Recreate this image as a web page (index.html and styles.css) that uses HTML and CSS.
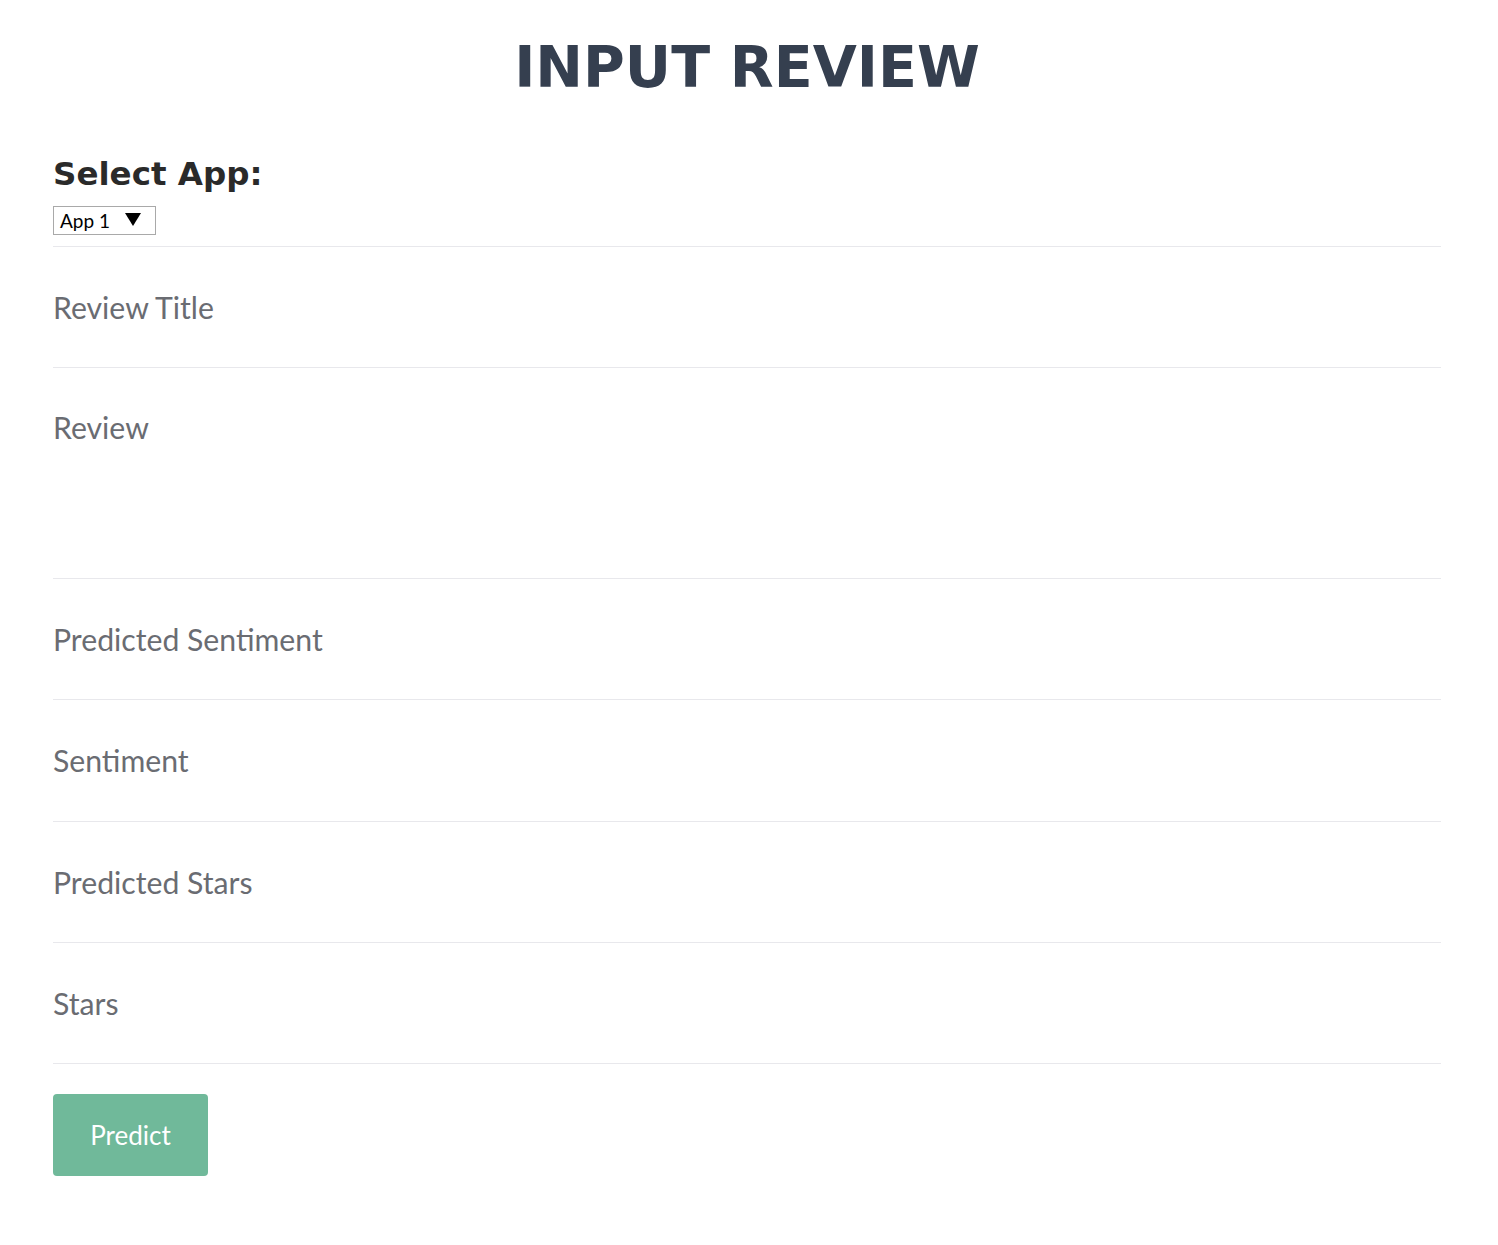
FILE: index.html
```html
<!DOCTYPE html>
<html>
<head>
<meta charset="utf-8">
<link rel="stylesheet" href="styles.css">
</head>
<body>
<div class="page">
  <h1 class="title">INPUT REVIEW</h1>
  <div class="select-group">
    <h2 class="select-label">Select App:</h2>
    <div class="select-box"><span>App 1</span><span class="arrow"></span></div>
  </div>
  <div class="field"><input class="input" placeholder="Review Title"></div>
  <div class="field field-tall"><textarea class="textarea" placeholder="Review"></textarea></div>
  <div class="field"><input class="input" placeholder="Predicted Sentiment"></div>
  <div class="field"><input class="input" placeholder="Sentiment"></div>
  <div class="field"><input class="input" placeholder="Predicted Stars"></div>
  <div class="field"><input class="input" placeholder="Stars"></div>
  <button class="btn">Predict</button>
</div>
</body>
</html>
```
FILE: styles.css
```css
* { box-sizing: border-box; }
html, body { margin: 0; padding: 0; background: #fff; }
body { font-family: "Lato", "Liberation Sans", sans-serif; }
.page { width: 1388px; margin-left: 53px; }
.title {
  margin: 0;
  padding-top: 35px;
  height: 130px;
  text-align: center;
  font-family: "DejaVu Sans", sans-serif;
  font-weight: 700;
  font-size: 57px;
  color: #353f4f;
  line-height: 64px;
}
.select-group { border-bottom: 1px solid #e8e8ec; height: 117px; padding-top: 22px; }
.select-label {
  margin: 0;
  font-family: "DejaVu Sans", sans-serif;
  font-weight: 700;
  font-size: 32.5px;
  line-height: 44px;
  color: #2a2a2a;
}
.select-box {
  margin-top: 10px;
  display: inline-flex;
  align-items: center;
  gap: 15px;
  width: 103px;
  height: 29px;
  border: 1px solid #a9a9a9;
  padding: 0 6px;
  font-size: 19px;
  color: #000;
}
.arrow {
  width: 0;
  height: 0;
  border-left: 8px solid transparent;
  border-right: 8px solid transparent;
  border-top: 13px solid #000;
  margin-top: -3px;
}
.field { border-bottom: 1px solid #e8e8ec; height: 121.2px; display: flex; }
.field-tall { height: 211px; }
.input, .textarea {
  flex: 1;
  border: 0;
  outline: none;
  background: transparent;
  font-family: "Lato", sans-serif;
  font-size: 30.2px;
  color: #333;
  padding: 0;
  margin: 0;
  resize: none;
}
.textarea { padding-top: 41px; line-height: 36px; }
.input::placeholder, .textarea::placeholder { color: #6a6c72; opacity: 1; }
.btn {
  margin-top: 30px;
  width: 155px;
  height: 82px;
  border: 0;
  border-radius: 4px;
  background: #70b99a;
  color: #fff;
  font-family: "Lato", sans-serif;
  font-size: 26px;
  padding: 0;
}
```
